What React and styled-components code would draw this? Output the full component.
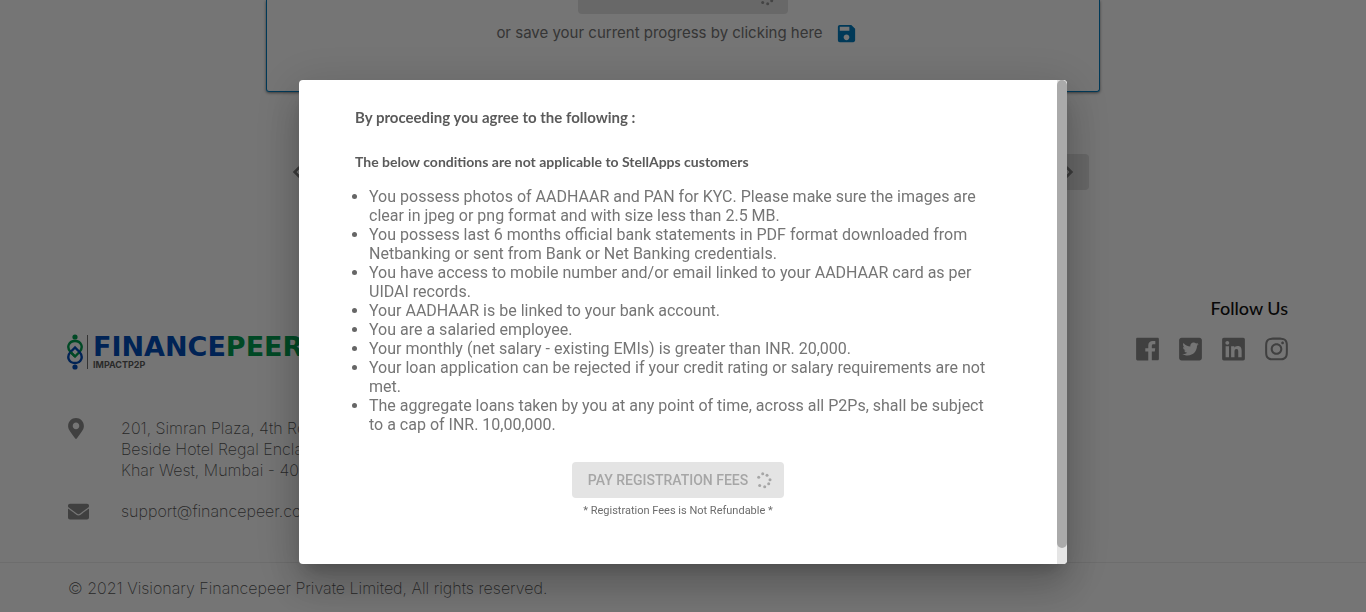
import React from 'react';
import styled, { createGlobalStyle } from 'styled-components';
import { MdSave, MdChevronLeft, MdChevronRight } from 'react-icons/md';
import {
  FaTwitterSquare,
  FaLinkedin,
  FaInstagram,
  FaMapMarkerAlt,
  FaEnvelope,
} from 'react-icons/fa';

const GlobalStyle = createGlobalStyle`
  *, *::before, *::after { box-sizing: border-box; }
  body {
    margin: 0;
    background: #ebebeb;
    color: #666;
    font-family: Roboto, 'Liberation Sans', sans-serif;
  }
`;

const Page = styled.div`
  display: flex;
  flex-direction: column;
  min-height: 100vh;
  overflow: hidden;
`;

const FormCard = styled.section`
  display: flex;
  flex-direction: column;
  align-items: center;
  width: 61%;
  min-width: 320px;
  height: 92px;
  margin: 0 auto;
  border: 1px solid #0072b0;
  border-top: 0;
  border-radius: 0 0 3px 3px;
  box-shadow: 0 1px 3px rgba(0, 0, 0, 0.5);
`;

const SubmitButton = styled.button`
  display: flex;
  align-items: flex-end;
  justify-content: flex-end;
  width: 210px;
  height: 14px;
  padding: 0 12px 8px;
  overflow: hidden;
  border: 0;
  border-radius: 0 0 4px 4px;
  background: #d0d0d0;
  color: #888;
`;

const SaveLine = styled.p`
  display: flex;
  align-items: center;
  gap: 12px;
  margin: 7px 0 0;
  padding-right: 12px;
  font: 400 15px/24px Inter, sans-serif;
  color: #6c6c6c;
`;

const SaveButton = styled.button`
  display: flex;
  padding: 0;
  border: 0;
  background: none;
  color: #0072b0;
  font-size: 23px;
`;

const Pager = styled.nav`
  display: flex;
  justify-content: space-between;
  width: 812px;
  max-width: 100%;
  margin: 62px auto 0;
`;

const PagerButton = styled.button`
  display: flex;
  align-items: center;
  justify-content: ${(p) => (p.$forward ? 'flex-end' : 'flex-start')};
  width: 100px;
  height: 36px;
  padding: 0 9px;
  border: 0;
  border-radius: 4px;
  background: ${(p) => (p.$forward ? '#d0d0d0' : 'transparent')};
  color: #777;
  font-size: 22px;

  path:not([fill='none']) {
    stroke: currentColor;
    stroke-width: 1px;
  }
`;

const Footer = styled.footer`
  display: flex;
  flex-direction: column;
  flex: 1;
  margin-top: 108px;
`;

const FooterBody = styled.div`
  display: flex;
  justify-content: space-between;
  padding: 0 78px 40px 66px;
`;

const Company = styled.div`
  padding-top: 34px;
`;

const Logo = styled.div`
  display: flex;
  align-items: center;
  gap: 5px;
  height: 40px;
`;

const LogoWords = styled.div`
  display: flex;
  flex-direction: column;
`;

const LogoName = styled.span`
  font: 700 27px/26px 'DejaVu Sans', sans-serif;
  color: ${(p) => p.$color};
`;

const LogoTag = styled.span`
  font: 700 9px/10px Inter, sans-serif;
  color: #555;
`;

const Contact = styled.address`
  display: grid;
  grid-template-columns: 53px auto;
  row-gap: 20px;
  margin-top: 46px;
  padding-left: 2px;
  font: 200 16px/21px Inter, sans-serif;
  color: #505050;
`;

const ContactIcon = styled.span`
  color: #808080;
  font-size: 21px;
  line-height: 0;

  svg {
    width: ${(p) => (p.$narrow ? '16px' : '21px')};
  }
`;

const MailLink = styled.a`
  color: inherit;
  text-decoration: none;
`;

const Follow = styled.div`
  display: flex;
  flex-direction: column;
  align-items: flex-end;
  gap: 20px;
`;

const FollowTitle = styled.h2`
  margin: 0;
  padding-top: 2px;
  font: 500 18px/16px Lato, sans-serif;
  color: #111;
`;

const SocialList = styled.div`
  display: flex;
  gap: 20px;
`;

const SocialLink = styled.a`
  display: flex;
  color: #808080;

  svg {
    width: 23px;
    height: 26px;
  }
`;

const Copyright = styled.p`
  margin: 0;
  padding: 14px 68px;
  border-top: 1px solid #dadada;
  font: 200 16px/22px Inter, sans-serif;
  color: #505050;
`;

const Backdrop = styled.div`
  position: fixed;
  inset: 0;
  display: flex;
  align-items: flex-start;
  justify-content: center;
  padding: 80px 16px 48px;
  background: rgba(0, 0, 0, 0.5);
`;

const Dialog = styled.div`
  display: flex;
  width: 768px;
  max-width: 100%;
  max-height: 100%;
  overflow: hidden;
  border-radius: 4px;
  background: #fff;
  box-shadow:
    0 11px 15px -7px rgba(0, 0, 0, 0.2),
    0 24px 38px 3px rgba(0, 0, 0, 0.14),
    0 9px 46px 8px rgba(0, 0, 0, 0.12);
`;

const DialogBody = styled.div`
  flex: 1;
  padding: 27px 56px 45px;
`;

const DialogTitle = styled.h1`
  margin: 0;
  font: 700 15px/20px Lato, sans-serif;
  color: #5a5a5a;
`;

const DialogNote = styled.h2`
  margin: 25px 0 15px;
  font: 700 14px/20px Lato, sans-serif;
  color: #5a5a5a;
`;

const Terms = styled.ul`
  margin: 0;
  padding: 0 14px;
  font-size: 16px;
  line-height: 19px;
  color: #757575;

  li::marker {
    color: #666;
  }
`;

const Payment = styled.div`
  display: flex;
  flex-direction: column;
  align-items: center;
  gap: 5px;
  margin-top: 28px;
`;

const PayButton = styled.button`
  display: flex;
  align-items: center;
  gap: 8px;
  height: 36px;
  padding: 0 11px 0 16px;
  border: 0;
  border-radius: 4px;
  background: #e4e4e4;
  color: #a6a6a6;
  font: 500 14px/20px Roboto, sans-serif;
  text-transform: uppercase;
`;

const Refund = styled.small`
  font-size: 11px;
  line-height: 16px;
  color: #6c6c6c;
`;

const ScrollTrack = styled.div`
  flex: none;
  width: 10px;
  padding-bottom: 16px;
  background: #e5e5e5;
`;

const ScrollThumb = styled.div`
  height: 100%;
  border-radius: 5px;
  background: #aaa;
`;

const terms = [
  'You possess photos of AADHAAR and PAN for KYC. Please make sure the images are clear in jpeg or png format and with size less than 2.5 MB.',
  'You possess last 6 months official bank statements in PDF format downloaded from Netbanking or sent from Bank or Net Banking credentials.',
  'You have access to mobile number and/or email linked to your AADHAAR card as per UIDAI records.',
  'Your AADHAAR is be linked to your bank account.',
  'You are a salaried employee.',
  'Your monthly (net salary - existing EMIs) is greater than INR. 20,000.',
  'Your loan application can be rejected if your credit rating or salary requirements are not met.',
  'The aggregate loans taken by you at any point of time, across all P2Ps, shall be subject to a cap of INR. 10,00,000.',
];

const spinnerDots = [
  [2.7, 5.2], [6.7, 1.8], [11, 3.2], [14, 7.8], [12.7, 11.8], [8.7, 14.8], [3.7, 13.5],
];

function Spinner() {
  return (
    <svg width="17" height="17" viewBox="0 0 17 17" fill="currentColor" aria-hidden="true">
      {spinnerDots.map(([x, y]) => (
        <circle key={`${x}-${y}`} cx={x} cy={y} r="1.5" />
      ))}
    </svg>
  );
}

function FacebookIcon() {
  return (
    <svg viewBox="0 0 448 512" fill="currentColor" aria-hidden="true">
      <path d="M448 56.7v398.5c0 13.7-11.1 24.7-24.7 24.7H309.1V306.5h58.2l8.7-67.6h-67v-43.2c0-19.6 5.4-32.9 33.5-32.9h35.8v-60.5c-6.2-.8-27.4-2.7-52.2-2.7-51.6 0-87 31.5-87 89.4v49.9h-58.4v67.6h58.4V480H24.7C11.1 480 0 468.9 0 455.3V56.7C0 43.1 11.1 32 24.7 32h398.5c13.7 0 24.8 11.1 24.8 24.7z" />
    </svg>
  );
}

function LogoMark() {
  return (
    <svg width="22" height="36" viewBox="0 0 22 36" fill="none" strokeWidth="2.4" aria-hidden="true">
      <circle cx="9" cy="3" r="2.6" fill="#00924a" />
      <circle cx="9" cy="33" r="2.6" fill="#0046aa" />
      <path d="M9 22.500L4.500 18C0 13 3 7 9 7s9 6 4.500 11z" stroke="#00924a" />
      <path d="M9 13.500L4.500 18C0 23 3 29 9 29s9-6 4.500-11z" stroke="#0046aa" />
      <path d="M9 22.500L4.500 18" stroke="#00924a" />
      <path d="M21.500 1v34" stroke="#666" strokeWidth="1" />
    </svg>
  );
}

export default function App() {
  return (
    <>
      <GlobalStyle />
      <Page>
        <main>
          <FormCard>
            <SubmitButton type="button" aria-label="Submit" disabled>
              <Spinner />
            </SubmitButton>
            <SaveLine>
              or save your current progress by clicking here
              <SaveButton type="button" aria-label="Save progress">
                <MdSave />
              </SaveButton>
            </SaveLine>
          </FormCard>
          <Pager>
            <PagerButton type="button" aria-label="Back">
              <MdChevronLeft />
            </PagerButton>
            <PagerButton type="button" aria-label="Next" $forward>
              <MdChevronRight />
            </PagerButton>
          </Pager>
        </main>
        <Footer>
          <FooterBody>
            <Company>
              <Logo>
                <LogoMark />
                <LogoWords>
                  <div>
                    <LogoName $color="#0046aa">FINANCE</LogoName>
                    <LogoName $color="#00924a">PEER</LogoName>
                  </div>
                  <LogoTag>IMPACTP2P</LogoTag>
                </LogoWords>
              </Logo>
              <Contact>
                <ContactIcon $narrow>
                  <FaMapMarkerAlt />
                </ContactIcon>
                <span>
                  201, Simran Plaza, 4th Road,
                  <br />
                  Beside Hotel Regal Enclave,
                  <br />
                  Khar West, Mumbai - 400052
                </span>
                <ContactIcon>
                  <FaEnvelope />
                </ContactIcon>
                <MailLink href="mailto:support@financepeer.com">support@financepeer.com</MailLink>
              </Contact>
            </Company>
            <Follow>
              <FollowTitle>Follow Us</FollowTitle>
              <SocialList>
                <SocialLink href="#facebook" aria-label="Facebook">
                  <FacebookIcon />
                </SocialLink>
                <SocialLink href="#twitter" aria-label="Twitter">
                  <FaTwitterSquare />
                </SocialLink>
                <SocialLink href="#linkedin" aria-label="LinkedIn">
                  <FaLinkedin />
                </SocialLink>
                <SocialLink href="#instagram" aria-label="Instagram">
                  <FaInstagram />
                </SocialLink>
              </SocialList>
            </Follow>
          </FooterBody>
          <Copyright>© 2021 Visionary Financepeer Private Limited, All rights reserved.</Copyright>
        </Footer>
      </Page>
      <Backdrop>
        <Dialog role="dialog" aria-modal="true" aria-labelledby="terms-title">
          <DialogBody>
            <DialogTitle id="terms-title">By proceeding you agree to the following :</DialogTitle>
            <DialogNote>The below conditions are not applicable to StellApps customers</DialogNote>
            <Terms>
              {terms.map((term) => (
                <li key={term}>{term}</li>
              ))}
            </Terms>
            <Payment>
              <PayButton type="button" disabled>
                Pay Registration Fees
                <Spinner />
              </PayButton>
              <Refund>* Registration Fees is Not Refundable *</Refund>
            </Payment>
          </DialogBody>
          <ScrollTrack>
            <ScrollThumb />
          </ScrollTrack>
        </Dialog>
      </Backdrop>
    </>
  );
}
